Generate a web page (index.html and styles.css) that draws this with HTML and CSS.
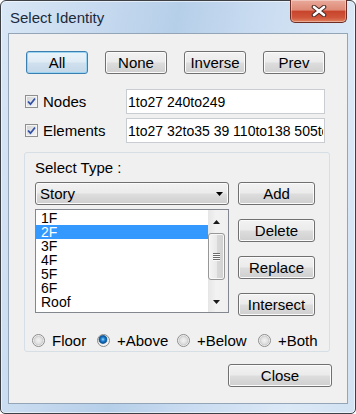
FILE: index.html
```html
<!DOCTYPE html>
<html lang="en">

<head>
    <meta charset="UTF-8">
    <title>Select Identity</title>
    <link rel="stylesheet" href="styles.css">
</head>

<body>
    <div class="window">
        <div class="titlebar">
            <span class="title">Select Identity</span>
            <div class="close-btn">
                <svg width="16" height="12" viewBox="0 0 16 12">
                    <path d="M3 2 L13 10 M13 2 L3 10" stroke="#4a2a26" stroke-width="4.6" stroke-linecap="round" fill="none"/>
                    <path d="M3 2 L13 10 M13 2 L3 10" stroke="#ffffff" stroke-width="2.6" stroke-linecap="round" fill="none"/>
                </svg>
            </div>
        </div>

        <div class="client">
            <div class="top-buttons">
                <button class="btn default">All</button>
                <button class="btn">None</button>
                <button class="btn">Inverse</button>
                <button class="btn">Prev</button>
            </div>

            <div class="field-row">
                <label class="check-label">
                    <span class="check">
                        <svg width="9" height="9" viewBox="0 0 9 9"><path d="M1 4.5 L3.5 7.2 L8 1.5" stroke="#3150a6" stroke-width="1.8" fill="none"/></svg>
                    </span>
                    Nodes
                </label>
                <input class="text-input" type="text" value="1to27 240to249">
            </div>

            <div class="field-row">
                <label class="check-label">
                    <span class="check">
                        <svg width="9" height="9" viewBox="0 0 9 9"><path d="M1 4.5 L3.5 7.2 L8 1.5" stroke="#3150a6" stroke-width="1.8" fill="none"/></svg>
                    </span>
                    Elements
                </label>
                <input class="text-input" type="text" value="1to27 32to35 39 110to138 505to510">
            </div>

            <div class="group">
                <div class="group-title">Select Type :</div>

                <div class="type-body">
                    <div class="type-left">
                        <div class="combo">
                            <span>Story</span>
                            <svg width="7" height="4" viewBox="0 0 7 4"><path d="M0 0 H7 L3.5 4 Z" fill="#000"/></svg>
                        </div>

                        <div class="listbox">
                            <div class="list-items">
                                <div class="list-item">1F</div>
                                <div class="list-item selected">2F</div>
                                <div class="list-item">3F</div>
                                <div class="list-item">4F</div>
                                <div class="list-item">5F</div>
                                <div class="list-item">6F</div>
                                <div class="list-item">Roof</div>
                            </div>
                            <div class="scrollbar">
                                <div class="sb-arrow up">
                                    <svg width="7" height="4" viewBox="0 0 7 4"><path d="M0 4 H7 L3.5 0 Z" fill="#1a1a1a"/></svg>
                                </div>
                                <div class="sb-thumb">
                                    <span></span><span></span><span></span><span></span>
                                </div>
                                <div class="sb-track"></div>
                                <div class="sb-arrow down">
                                    <svg width="7" height="4" viewBox="0 0 7 4"><path d="M0 0 H7 L3.5 4 Z" fill="#1a1a1a"/></svg>
                                </div>
                            </div>
                        </div>
                    </div>

                    <div class="type-right">
                        <button class="btn">Add</button>
                        <button class="btn">Delete</button>
                        <button class="btn">Replace</button>
                        <button class="btn">Intersect</button>
                    </div>
                </div>

                <div class="radios">
                    <label class="radio-item"><span class="radio"></span>Floor</label>
                    <label class="radio-item"><span class="radio checked"></span>+Above</label>
                    <label class="radio-item"><span class="radio"></span>+Below</label>
                    <label class="radio-item"><span class="radio"></span>+Both</label>
                </div>
            </div>

            <div class="footer">
                <button class="btn close">Close</button>
            </div>
        </div>
    </div>
</body>

</html>
```

FILE: styles.css
```css
* {
    box-sizing: border-box;
    margin: 0;
    padding: 0;
}

body {
    background-color: #ffffff;
    font-family: 'Liberation Sans', Arial, sans-serif;
    font-size: 15px;
    color: #000;
}

.window {
    width: 356px;
    height: 414px;
    border: 1px solid #3d4146;
    border-radius: 6px 6px 5px 5px;
    background: linear-gradient(100deg, #d9e7f6 0%, #c4d8ee 26%, #b6cfe9 42%, #cadcf1 62%, #dbe8f6 84%, #d2e2f3 100%);
    box-shadow: inset 0 0 0 1px rgba(255, 255, 255, 0.55);
    padding: 0 7px 9px;
    display: flex;
    flex-direction: column;
}

.titlebar {
    height: 32px;
    display: flex;
    align-items: flex-start;
}

.title {
    margin: 8px 0 0 2px;
    line-height: 17px;
    color: #1b2a3d;
}

.close-btn {
    margin: -1px 1px 0 auto;
    width: 57px;
    height: 23px;
    border: 1px solid #6e2c22;
    border-top: none;
    border-radius: 0 0 5px 5px;
    background: linear-gradient(#e9aa9b 0%, #de8a76 45%, #c8452c 52%, #d0553a 80%, #e08460 100%);
    box-shadow: inset 0 0 0 1px rgba(255, 255, 255, 0.35);
    display: flex;
    align-items: center;
    justify-content: center;
}

.client {
    flex: 1;
    background-color: #f0f0f0;
    border: 1px solid #95a5b8;
    display: flex;
    flex-direction: column;
}

.btn {
    height: 23px;
    border: 1px solid #707070;
    border-radius: 3px;
    background: linear-gradient(#f2f2f2 0%, #ebebeb 48%, #dddddd 52%, #cfcfcf 100%);
    box-shadow: inset 0 0 0 1px #fbfbfb;
    font: inherit;
    color: #000;
    line-height: 21px;
    text-align: center;
}

.btn.default {
    border-color: #3c7fb1;
    box-shadow: inset 0 0 0 1px #9bd3f3;
    background: linear-gradient(#eaf3fa 0%, #dfebf5 48%, #d0e0ee 52%, #c4d8e9 100%);
}

.top-buttons {
    display: flex;
    gap: 17px;
    margin: 17px 0 0 17px;
}

.top-buttons .btn {
    width: 62px;
}

.field-row {
    display: flex;
    align-items: center;
    margin: 15px 0 0 16px;
}

.field-row + .field-row {
    margin-top: 4px;
}

.check-label {
    width: 101px;
    display: flex;
    align-items: center;
    gap: 5px;
    line-height: 17px;
}

.check {
    width: 13px;
    height: 13px;
    border: 1px solid #8e8f8f;
    background: linear-gradient(135deg, #cfd0d1, #f7f7f7);
    box-shadow: inset 0 0 0 1px #f4f4f4;
    display: flex;
    align-items: center;
    justify-content: center;
}

.text-input {
    width: 199px;
    height: 25px;
    border: 1px solid #c9cdd2;
    background-color: #fff;
    font: 14px 'Liberation Sans', Arial, sans-serif;
    color: #000;
    padding: 0 1px;
    outline: none;
}

.group {
    margin: 9px 17px 0 15px;
    height: 200px;
    border: 1px solid #d5dfe5;
    border-radius: 3px;
    padding: 6px 14px 0 10px;
}

.group-title {
    line-height: 17px;
}

.type-body {
    display: flex;
    gap: 9px;
    margin-top: 6px;
}

.type-left {
    width: 194px;
    display: flex;
    flex-direction: column;
    gap: 4px;
}

.combo {
    height: 23px;
    border: 1px solid #707070;
    border-radius: 3px;
    background: linear-gradient(#f2f2f2 0%, #ebebeb 48%, #dddddd 52%, #cfcfcf 100%);
    box-shadow: inset 0 0 0 1px #fbfbfb;
    display: flex;
    align-items: center;
    justify-content: space-between;
    padding: 0 5px 0 4px;
    line-height: 21px;
}

.listbox {
    height: 104px;
    border: 1px solid #828790;
    background-color: #fff;
    display: flex;
}

.list-items {
    flex: 1;
    padding-top: 1px;
}

.list-item {
    font-size: 14px;
    line-height: 14px;
    padding-left: 5px;
}

.list-item.selected {
    background-color: #3399ff;
    color: #fff;
}

.scrollbar {
    width: 20px;
    background: linear-gradient(90deg, #e6e6e6, #f2f2f2 40%, #f0f0f0);
    display: flex;
    flex-direction: column;
    padding-right: 3px;
}

.sb-arrow {
    display: flex;
    align-items: center;
    justify-content: center;
}

.sb-arrow.up {
    height: 23px;
}

.sb-arrow.down {
    height: 20px;
}

.sb-thumb {
    height: 47px;
    border: 1px solid #979797;
    border-radius: 3px;
    background: linear-gradient(90deg, #f5f5f5 0%, #e9e9e9 50%, #d9d9d9 52%, #d0d0d0 100%);
    box-shadow: inset 0 0 0 1px #f8f8f8;
    display: flex;
    flex-direction: column;
    align-items: center;
    justify-content: center;
    gap: 1px;
}

.sb-thumb span {
    width: 7px;
    height: 1px;
    background-color: #6a6a6a;
    box-shadow: 0 1px 0 #fafafa;
}

.sb-track {
    flex: 1;
}

.type-right {
    width: 77px;
    display: flex;
    flex-direction: column;
    gap: 14px;
}

.radios {
    display: grid;
    grid-template-columns: 65px 80px 81px auto;
    margin: 16px 0 0 -3px;
    line-height: 17px;
}

.radio-item {
    display: flex;
    align-items: center;
    gap: 7px;
}

.radio {
    width: 13px;
    height: 13px;
    border-radius: 50%;
    border: 1px solid #8c8c8c;
    background: radial-gradient(circle at 50% 50%, #f2f2f2 0, #e2e2e2 3px, #cfcfcf 4.5px, #f4f4f4 5.2px);
}

.radio.checked {
    background: radial-gradient(circle at 45% 40%, #9fdcff 0, #2a8bd6 1.6px, #0b57a0 3.4px, #2d6ea8 4.1px, #cfcfcf 4.6px, #f4f4f4 5.2px);
}

.footer {
    display: flex;
    justify-content: flex-end;
    margin: 12px 15px 0 0;
}

.btn.close {
    width: 104px;
}
```
